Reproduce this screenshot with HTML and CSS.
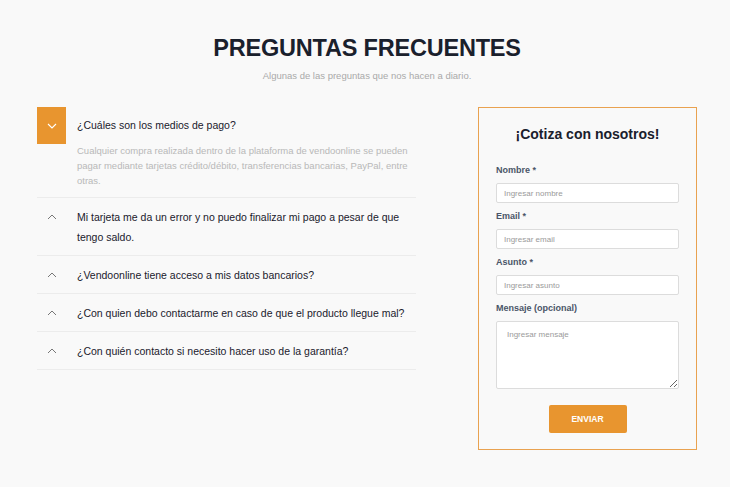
FILE: index.html
```html
<!DOCTYPE html>
<html lang="es">
<head>
    <meta charset="UTF-8">
    <meta name="viewport" content="width=device-width, initial-scale=1.0">
    <title>Preguntas frecuentes</title>
    <link rel="stylesheet" href="styles.css">
</head>
<body>
    <section class="faq-section">
        <header class="faq-header">
            <h1>PREGUNTAS FRECUENTES</h1>
            <p>Algunas de las preguntas que nos hacen a diario.</p>
        </header>

        <div class="faq-content">
            <div class="faq-list">
                <div class="faq-item open">
                    <div class="faq-question">
                        <span class="faq-icon">
                            <svg width="10" height="6" viewBox="0 0 10 6"><path d="M1 1l4 4 4-4" fill="none" stroke="#fff" stroke-width="1.1"/></svg>
                        </span>
                        <span class="faq-text">¿Cuáles son los medios de pago?</span>
                    </div>
                    <p class="faq-answer">Cualquier compra realizada dentro de la plataforma de vendoonline se pueden pagar mediante tarjetas crédito/débito, transferencias bancarias, PayPal, entre otras.</p>
                </div>
                <div class="faq-item">
                    <div class="faq-question">
                        <span class="faq-icon">
                            <svg width="10" height="6" viewBox="0 0 10 6"><path d="M1 5l4-4 4 4" fill="none" stroke="#555" stroke-width="0.8"/></svg>
                        </span>
                        <span class="faq-text">Mi tarjeta me da un error y no puedo finalizar mi pago a pesar de que tengo saldo.</span>
                    </div>
                </div>
                <div class="faq-item">
                    <div class="faq-question">
                        <span class="faq-icon">
                            <svg width="10" height="6" viewBox="0 0 10 6"><path d="M1 5l4-4 4 4" fill="none" stroke="#555" stroke-width="0.8"/></svg>
                        </span>
                        <span class="faq-text">¿Vendoonline tiene acceso a mis datos bancarios?</span>
                    </div>
                </div>
                <div class="faq-item">
                    <div class="faq-question">
                        <span class="faq-icon">
                            <svg width="10" height="6" viewBox="0 0 10 6"><path d="M1 5l4-4 4 4" fill="none" stroke="#555" stroke-width="0.8"/></svg>
                        </span>
                        <span class="faq-text">¿Con quien debo contactarme en caso de que el producto llegue mal?</span>
                    </div>
                </div>
                <div class="faq-item">
                    <div class="faq-question">
                        <span class="faq-icon">
                            <svg width="10" height="6" viewBox="0 0 10 6"><path d="M1 5l4-4 4 4" fill="none" stroke="#555" stroke-width="0.8"/></svg>
                        </span>
                        <span class="faq-text">¿Con quién contacto si necesito hacer uso de la garantía?</span>
                    </div>
                </div>
            </div>

            <form class="quote-form">
                <h2>¡Cotiza con nosotros!</h2>
                <label for="nombre">Nombre *</label>
                <input type="text" id="nombre" placeholder="Ingresar nombre">
                <label for="email">Email *</label>
                <input type="email" id="email" placeholder="Ingresar email">
                <label for="asunto">Asunto *</label>
                <input type="text" id="asunto" placeholder="Ingresar asunto">
                <label for="mensaje">Mensaje (opcional)</label>
                <textarea id="mensaje" placeholder="Ingresar mensaje"></textarea>
                <button type="button">ENVIAR</button>
            </form>
        </div>
    </section>
</body>
</html>
```

FILE: styles.css
```css
body {
    margin: 0;
    background-color: #f9f9f9;
    font-family: "Liberation Sans", Arial, sans-serif;
    color: #1a202c;
}

.faq-section {
    padding: 34px 33px 37px 37px;
}

.faq-header {
    text-align: center;
}

.faq-header h1 {
    margin: 0;
    font-size: 23.5px;
    line-height: 28px;
    letter-spacing: -0.2px;
    font-weight: bold;
    color: #1a202c;
}

.faq-header p {
    margin: 7px 0 0;
    font-size: 9.5px;
    line-height: 14px;
    color: #a9a9a9;
}

.faq-content {
    display: grid;
    grid-template-columns: 379px 219px;
    justify-content: space-between;
    align-items: start;
    margin-top: 24px;
}

.faq-item {
    border-bottom: 1px solid #ececec;
}

.faq-question {
    display: flex;
    align-items: flex-start;
}

.faq-icon {
    display: flex;
    justify-content: center;
    align-items: center;
    width: 29px;
    height: 37px;
    margin-right: 11px;
}

.faq-item.open .faq-icon {
    background-color: #e8952f;
}

.faq-text {
    width: 330px;
    padding: 9px 0 8px;
    font-size: 10.5px;
    line-height: 20px;
}

.faq-item.open .faq-text {
    padding: 8px 0 9px;
}

.faq-answer {
    margin: -1px 0 0;
    padding: 0 0 9px 40px;
    width: 334px;
    font-size: 9.5px;
    line-height: 15px;
    color: #b8b8b8;
}

.quote-form {
    display: flex;
    flex-direction: column;
    border: 1px solid #e9a250;
    padding: 16px 17px 16px 17px;
}

.quote-form h2 {
    margin: 0 0 20px;
    text-align: center;
    font-size: 14px;
    line-height: 20px;
    color: #1a202c;
}

.quote-form label {
    font-size: 9px;
    line-height: 13px;
    font-weight: bold;
    color: #4a5568;
    margin-bottom: 6px;
}

.quote-form input,
.quote-form textarea {
    box-sizing: border-box;
    width: 100%;
    border: 1px solid #dcdcdc;
    border-radius: 2px;
    background-color: #fff;
    font-family: "Liberation Sans", Arial, sans-serif;
    font-size: 8px;
    margin: 0 0 7px;
}

.quote-form input {
    height: 20px;
    padding: 0 7px;
}

.quote-form textarea {
    height: 68px;
    padding: 8px 10px;
    margin-bottom: 16px;
}

.quote-form input::placeholder,
.quote-form textarea::placeholder {
    color: #9a9a9a;
}

.quote-form button {
    align-self: center;
    width: 78px;
    height: 28px;
    border: none;
    border-radius: 2px;
    background-color: #e8952f;
    color: #fff;
    font-family: "Liberation Sans", Arial, sans-serif;
    font-size: 8.5px;
    font-weight: bold;
    cursor: pointer;
}
```
